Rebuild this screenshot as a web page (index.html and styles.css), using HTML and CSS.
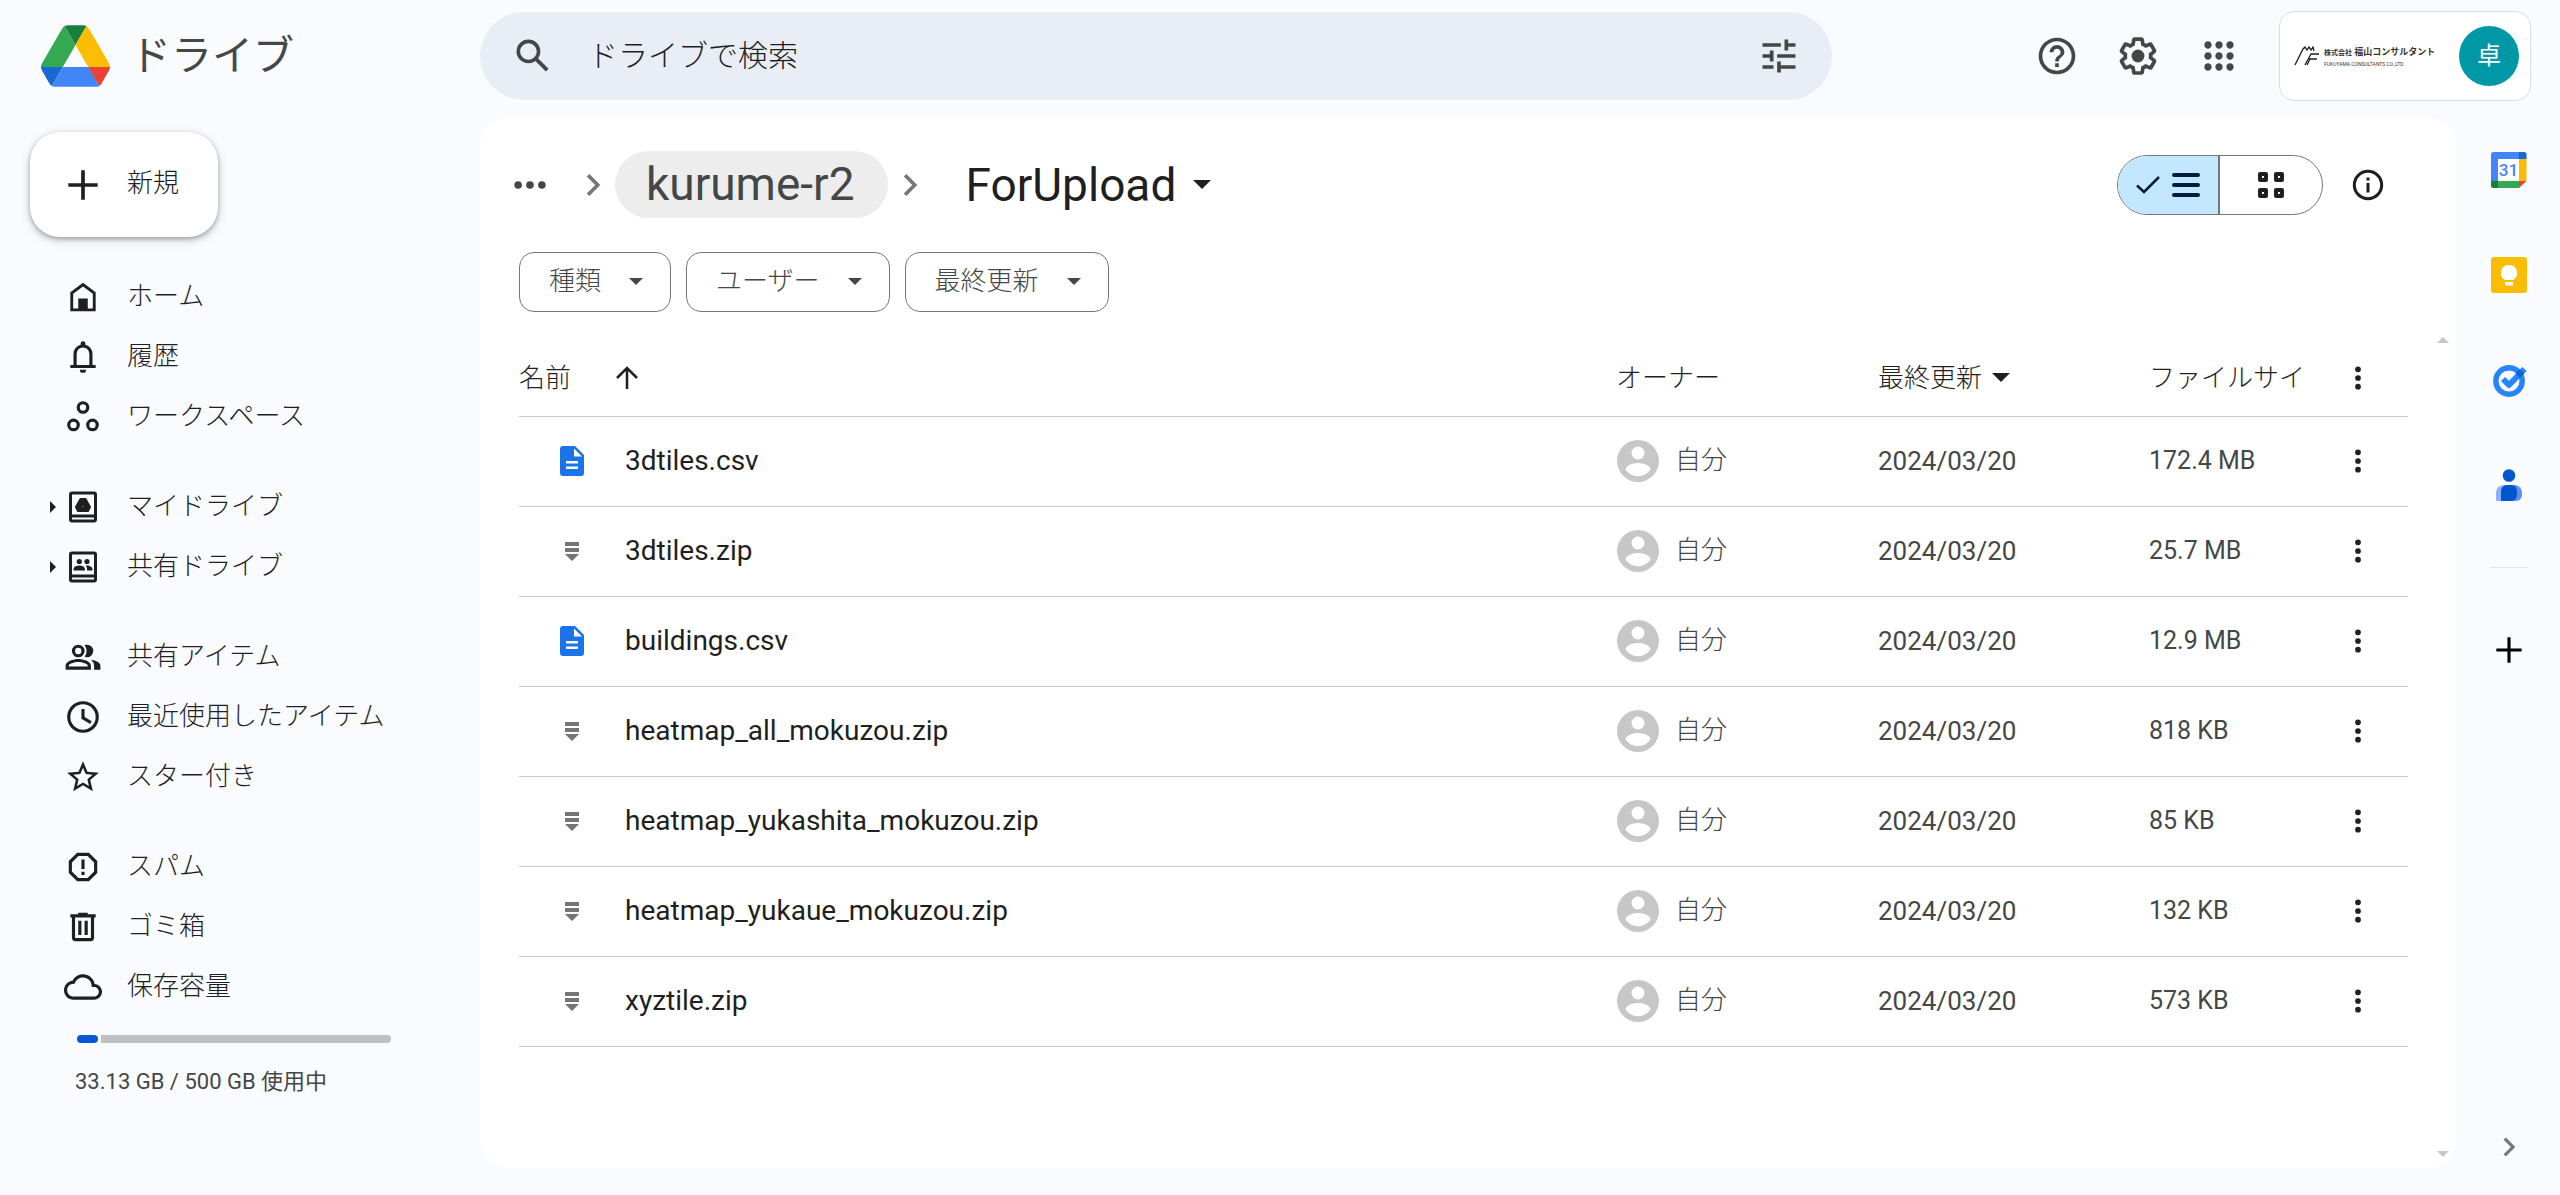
FILE: index.html
```html
<!DOCTYPE html>
<html lang="ja">
<head>
<meta charset="utf-8">
<title>ForUpload - ドライブ</title>
<link rel="stylesheet" href="styles.css">
</head>
<body>
<svg class="defs" aria-hidden="true">
  <symbol id="dots-v" viewBox="0 0 24 24"><circle cx="12" cy="6.500" r="1.800"/><circle cx="12" cy="12" r="1.800"/><circle cx="12" cy="17.500" r="1.800"/></symbol>
  <symbol id="doc" viewBox="0 0 24 30"><path fill="#1a73e8" d="M3 0h12l9 9v18a3 3 0 0 1-3 3H3a3 3 0 0 1-3-3V3a3 3 0 0 1 3-3z"/><path fill="#fff" d="M14 2.500v8h8zM6 15h12v2.500H6zM6 20.500h12V23H6z"/></symbol>
  <symbol id="zip" viewBox="0 0 24 30"><path fill="#757575" d="M5 6h14v4H5zM5 12h14v4H5zM5 18h14l-7 7z"/></symbol>
  <symbol id="person" viewBox="0 0 42 42"><circle cx="21" cy="21" r="21" fill="#c7c7c7"/><circle cx="21" cy="13" r="6.500" fill="#fff"/><path fill="#fff" d="M8.500 29.500c0-4.500 8.300-6.500 12.500-6.500s12.500 2 12.500 6.500a15 15 0 0 1-25 0z"/></symbol>
  <symbol id="chev" viewBox="0 0 24 24"><path d="M8.600 16.600 13.200 12 8.600 7.400 10 6l6 6-6 6z"/></symbol>
  <symbol id="plus" viewBox="0 0 24 24"><path d="M20 13h-7v7h-2v-7H4v-2h7V4h2v7h7z"/></symbol>
</svg>

<header class="top">
  <a class="brand" href="#">
    <svg class="brand-logo" viewBox="0 0 87.300 78"><path d="m6.600 66.850 3.850 6.650c.8 1.400 1.950 2.500 3.300 3.300l13.750-23.800h-27.500c0 1.550.4 3.100 1.200 4.500z" fill="#1967d2"/><path d="m43.650 25-13.750-23.800c-1.350.8-2.500 1.900-3.300 3.300l-25.400 44a9.060 9.060 0 0 0 -1.200 4.500h27.500z" fill="#34a853"/><path d="m73.550 76.800c1.350-.8 2.500-1.900 3.300-3.300l1.600-2.750 7.650-13.250c.8-1.400 1.200-2.950 1.200-4.500h-27.502l5.852 11.500z" fill="#ea4335"/><path d="m43.650 25 13.750-23.800c-1.350-.8-2.900-1.200-4.500-1.200h-18.500c-1.600 0-3.150.45-4.500 1.200z" fill="#188038"/><path d="m59.800 53h-32.300l-13.750 23.800c1.350.8 2.900 1.200 4.500 1.200h50.800c1.600 0 3.150-.45 4.500-1.200z" fill="#4285f4"/><path d="m73.400 26.500-12.700-22c-.8-1.400-1.950-2.500-3.300-3.300l-13.750 23.800 16.150 28h27.450c0-1.550-.4-3.100-1.200-4.500z" fill="#fbbc04"/></svg>
    <span>ドライブ</span>
  </a>
  <form class="search">
    <button class="icon-btn" type="button" aria-label="検索"><svg class="i44" viewBox="0 0 24 24"><path d="M20.490 19l-5.730-5.730C15.530 12.200 16 10.910 16 9.500A6.500 6.500 0 1 0 9.500 16c1.410 0 2.700-.47 3.770-1.240L19 20.490 20.490 19zM5 9.500C5 7.010 7.010 5 9.500 5S14 7.010 14 9.500 11.990 14 9.500 14 5 11.990 5 9.500z"/></svg></button>
    <input type="text" placeholder="ドライブで検索" aria-label="ドライブで検索">
    <button class="icon-btn" type="button" aria-label="検索オプション"><svg class="i44" viewBox="0 0 24 24"><path d="M3 17v2h6v-2H3zM3 5v2h10V5H3zm10 16v-2h8v-2h-8v-2h-2v6h2zM7 9v2H3v2h4v2h2V9H7zm14 4v-2H11v2h10zm-6-4h2V7h4V5h-4V3h-2v6z"/></svg></button>
  </form>
  <div class="tools">
    <button class="icon-btn" aria-label="ヘルプ"><svg class="i44" viewBox="0 0 24 24"><path d="M11 18h2v-2h-2v2zm1-16C6.480 2 2 6.480 2 12s4.480 10 10 10 10-4.480 10-10S17.520 2 12 2zm0 18c-4.410 0-8-3.590-8-8s3.590-8 8-8 8 3.590 8 8-3.590 8-8 8zm0-14c-2.210 0-4 1.790-4 4h2c0-1.100.9-2 2-2s2 .9 2 2c0 2-3 1.750-3 5h2c0-2.250 3-2.500 3-5 0-2.210-1.790-4-4-4z"/></svg></button>
    <button class="icon-btn" aria-label="設定"><svg class="i44" viewBox="0 0 24 24"><path d="M13.850 22.250h-3.700c-.74 0-1.360-.54-1.450-1.270l-.27-1.890c-.27-.14-.53-.29-.79-.46l-1.800.72c-.7.26-1.470-.03-1.810-.65L2.200 15.530c-.35-.66-.2-1.440.36-1.880l1.530-1.190c-.01-.15-.02-.3-.02-.46 0-.15.010-.31.020-.46l-1.520-1.190c-.59-.45-.74-1.260-.37-1.880l1.850-3.190c.34-.62 1.110-.9 1.790-.63l1.810.73c.26-.17.52-.32.780-.46l.27-1.910c.09-.7.71-1.250 1.440-1.250h3.700c.74 0 1.360.54 1.450 1.270l.27 1.890c.27.14.53.29.79.46l1.800-.72c.71-.26 1.480.03 1.820.65l1.840 3.180c.36.66.2 1.440-.36 1.880l-1.520 1.190c.01.15.02.3.02.46s-.01.31-.02.46l1.520 1.190c.56.450.72 1.230.37 1.860l-1.860 3.220c-.34.62-1.110.9-1.800.63l-1.800-.72c-.26.17-.52.32-.78.46l-.27 1.910c-.1.68-.72 1.220-1.460 1.220zm-3.230-2h2.760l.37-2.550.53-.22c.44-.18.88-.44 1.340-.78l.45-.34 2.380.96 1.380-2.400-2.030-1.580.07-.56c.03-.26.06-.51.06-.78s-.03-.53-.06-.78l-.07-.56 2.030-1.580-1.390-2.400-2.390.96-.45-.35c-.42-.32-.87-.58-1.330-.77l-.52-.22-.37-2.550h-2.760l-.37 2.550-.53.210c-.44.19-.88.440-1.340.79l-.45.330-2.380-.95-1.390 2.390 2.030 1.580-.07.56a7 7 0 0 0-.06.79c0 .26.02.53.06.78l.07.56-2.030 1.580 1.380 2.400 2.390-.96.45.35c.43.330.86.580 1.330.77l.53.220z"/><circle cx="12" cy="12" r="3.500"/></svg></button>
    <button class="icon-btn" aria-label="Google アプリ"><svg class="i44" viewBox="0 0 24 24"><path d="M6 8c1.100 0 2-.9 2-2s-.9-2-2-2-2 .9-2 2 .9 2 2 2zm6 12c1.100 0 2-.9 2-2s-.9-2-2-2-2 .9-2 2 .9 2 2 2zm-6 0c1.100 0 2-.9 2-2s-.9-2-2-2-2 .9-2 2 .9 2 2 2zm0-6c1.100 0 2-.9 2-2s-.9-2-2-2-2 .9-2 2 .9 2 2 2zm6 0c1.100 0 2-.9 2-2s-.9-2-2-2-2 .9-2 2 .9 2 2 2zm4-8c0 1.100.9 2 2 2s2-.9 2-2-.9-2-2-2-2 .9-2 2zm-4 2c1.100 0 2-.9 2-2s-.9-2-2-2-2 .9-2 2 .9 2 2 2zm6 6c1.100 0 2-.9 2-2s-.9-2-2-2-2 .9-2 2 .9 2 2 2zm0 6c1.100 0 2-.9 2-2s-.9-2-2-2-2 .9-2 2 .9 2 2 2z"/></svg></button>
  </div>
  <button class="account">
    <svg class="co-mark stroked" viewBox="0 0 26 20" stroke-width="1.300"><path d="M1 19 9 3l2-2 2 3 2-3 2 3 2-3 1 4M11 19l6-11h8M15 13h8M16 13l-3 6"/></svg>
    <span class="co-text"><span class="co-name"><small>株式会社</small> 福山コンサルタント</span><span class="co-en">FUKUYAMA CONSULTANTS CO.,LTD</span></span>
    <span class="avatar">卓</span>
  </button>
</header>

<div class="body">
  <aside class="side">
    <button class="new"><svg class="i44" viewBox="0 0 24 24"><use href="#plus"/></svg><span class="label">新規</span></button>
    <nav>
      <ul>
        <li><a href="#"><svg class="i38" viewBox="0 0 24 24"><path fill-rule="evenodd" d="M12 3 4 9v12h16V9zM12 5.300 18.200 10v9.200H15V13H9v6.200H5.800V10z"/></svg><span class="label">ホーム</span></a></li>
        <li><a href="#"><svg class="i38" viewBox="0 0 24 24"><path fill-rule="evenodd" d="M4 19v-2h2v-7a6 6 0 0 1 4.500-5.800v-.7a1.500 1.500 0 0 1 3 0v.7A6 6 0 0 1 18 10v7h2v2zM8 17h8v-7a4 4 0 0 0-8 0zM12 22a2 2 0 0 1-2-2h4a2 2 0 0 1-2 2z"/></svg><span class="label">履歴</span></a></li>
        <li><a href="#"><svg class="i38 stroked" viewBox="0 0 24 24" stroke-width="2"><circle cx="12" cy="6" r="3"/><circle cx="6" cy="17" r="3"/><circle cx="18" cy="17" r="3"/></svg><span class="label">ワークスペース</span></a></li>
      </ul>
      <ul>
        <li><a class="tree" href="#"><svg class="i38" viewBox="0 0 38 38"><rect x="6.500" y="5" width="25" height="28" rx="1.500" fill="none" stroke="currentColor" stroke-width="3"/><path d="M6 26.500h26v3H6z"/><path fill-rule="evenodd" stroke="currentColor" stroke-width="2" stroke-linejoin="round" d="M16.500 11h5l4.500 8-2 4H14l-2-4zM19 15l-2.500 4.500h5z"/></svg><span class="label">マイドライブ</span></a></li>
        <li><a class="tree" href="#"><svg class="i38" viewBox="0 0 38 38"><rect x="6.500" y="5" width="25" height="28" rx="1.500" fill="none" stroke="currentColor" stroke-width="3"/><path d="M6 26.500h26v3H6z"/><circle cx="15.300" cy="13.500" r="2.600"/><circle cx="23" cy="13.500" r="2.600"/><path d="M9.500 22.500v-1.500c0-2.500 3.800-3.500 5.800-3.500s5.700 1 5.700 3.500v1.500zM23 22.500v-1.500c0-1.500-.6-2.500-1.500-3.400 3-.4 7 .9 7 3.400v1.500z"/></svg><span class="label">共有ドライブ</span></a></li>
      </ul>
      <ul>
        <li><a href="#"><svg class="i38" viewBox="0 0 24 24"><path fill-rule="evenodd" d="M9 4.200A4 4 0 1 0 9 12.200 4 4 0 0 0 9 4.200zm0 2a2 2 0 1 1 0 4 2 2 0 0 1 0-4zM9 13.300c-2.700 0-8 1.300-8 4.200V20h16v-2.500c0-2.900-5.300-4.200-8-4.200zM15 18H3v-.6c0-1 3.300-2.200 6-2.200s6 1.200 6 2.200zM14.500 12.200a4 4 0 0 0 0-8c-.6 0-1 .1-1.500.3a6 6 0 0 1 0 7.400c.5.200.9.300 1.500.3zM17 13.700c1.200.9 2 2.100 2 3.800V20h4v-2.500c0-2.200-3-3.400-6-3.800z"/></svg><span class="label">共有アイテム</span></a></li>
        <li><a href="#"><svg class="i38 stroked" viewBox="0 0 24 24" stroke-width="2"><circle cx="12" cy="12" r="9"/><path d="M12 7v5.500l5 3"/></svg><span class="label">最近使用したアイテム</span></a></li>
        <li><a href="#"><svg class="i38" viewBox="0 0 24 24"><path d="M22 9.240l-7.190-.62L12 2 9.190 8.630 2 9.240l5.460 4.730L5.820 21 12 17.270 18.180 21l-1.630-7.030L22 9.240zM12 15.400l-3.760 2.270 1-4.280-3.320-2.880 4.380-.38L12 6.100l1.710 4.040 4.380.38-3.320 2.880 1 4.280L12 15.400z"/></svg><span class="label">スター付き</span></a></li>
      </ul>
      <ul>
        <li><a href="#"><svg class="i38 stroked" viewBox="0 0 24 24" stroke-width="2"><path d="M8.700 4h6.600L20 8.700v6.600L15.300 20H8.700L4 15.300V8.700zM12 7.300v6M12 15v2"/></svg><span class="label">スパム</span></a></li>
        <li><a href="#"><svg class="i38" viewBox="0 0 24 24"><path d="M15 4V3H9v1H4v2h1v13c0 1.100.9 2 2 2h10c1.100 0 2-.9 2-2V6h1V4h-5zm2 15H7V6h10v13zM9 8h2v9H9zm4 0h2v9h-2z"/></svg><span class="label">ゴミ箱</span></a></li>
        <li><a href="#"><svg class="i38" viewBox="0 0 24 24"><path d="M19.350 10.040C18.670 6.590 15.640 4 12 4 9.110 4 6.600 5.640 5.350 8.040 2.340 8.360 0 10.910 0 14c0 3.310 2.690 6 6 6h13c2.760 0 5-2.240 5-5 0-2.640-2.050-4.780-4.650-4.960zM19 18H6c-2.210 0-4-1.790-4-4s1.790-4 4-4h.71C7.370 7.690 9.480 6 12 6c3.040 0 5.500 2.460 5.500 5.500v.5H19c1.660 0 3 1.340 3 3s-1.340 3-3 3z"/></svg><span class="label">保存容量</span></a></li>
      </ul>
    </nav>
    <div class="meter"><span class="used"></span><span class="free"></span></div>
    <p class="quota">33.13 GB / 500 GB 使用中</p>
  </aside>

  <main class="main">
    <div class="path">
      <button class="icon-btn dots" aria-label="パスを表示"><svg class="i38" viewBox="0 0 24 24"><circle cx="4.500" cy="12" r="2.400"/><circle cx="12" cy="12" r="2.400"/><circle cx="19.500" cy="12" r="2.400"/></svg></button>
      <svg class="i44 sep" viewBox="0 0 24 24"><use href="#chev"/></svg>
      <a class="crumb" href="#">kurume-r2</a>
      <svg class="i44 sep" viewBox="0 0 24 24"><use href="#chev"/></svg>
      <button class="current">ForUpload<i class="caret wide"></i></button>
      <div class="views">
        <button class="on" aria-label="リスト レイアウト"><svg class="v-check stroked" viewBox="0 0 24 18" stroke-width="2.500"><path d="M1 9.500 8 16 23 1"/></svg><svg class="v-list stroked" viewBox="0 0 28 24" stroke-width="4" stroke-linecap="round"><path d="M2 2h24M2 12h24M2 22h24"/></svg></button>
        <button aria-label="グリッド レイアウト"><svg class="v-grid stroked" viewBox="0 0 28 28" stroke-width="4" stroke-linejoin="round"><path d="M3 3h6v6H3zM19 3h6v6h-6zM3 19h6v6H3zM19 19h6v6h-6z"/></svg></button>
      </div>
      <button class="icon-btn info" aria-label="詳細を表示"><svg class="i38" viewBox="0 0 20 20"><path fill-rule="evenodd" d="M10 2a8 8 0 1 0 0 16 8 8 0 0 0 0-16zm0 1.600a6.400 6.400 0 1 1 0 12.800 6.400 6.400 0 0 1 0-12.800zM9.200 9h1.600v5H9.200zM9.200 6h1.600v1.600H9.200z"/></svg></button>
    </div>
    <div class="chips">
      <button>種類<i class="caret"></i></button>
      <button>ユーザー<i class="caret"></i></button>
      <button>最終更新<i class="caret"></i></button>
    </div>
    <div class="list">
      <table>
        <colgroup><col class="c-name"><col class="c-owner"><col class="c-date"><col class="c-size"><col class="c-more"></colgroup>
        <thead><tr>
          <th><span class="cell sort">名前<svg class="arrow stroked" viewBox="0 0 24 24" stroke-width="2.500"><path d="M12 23V2M2 12 12 2l10 10"/></svg></span></th>
          <th>オーナー</th>
          <th><span class="cell mod">最終更新<i class="caret wide"></i></span></th>
          <th>ファイルサイ</th>
          <th><button class="icon-btn" aria-label="その他"><svg class="i38"><use href="#dots-v"/></svg></button></th>
        </tr></thead>
        <tbody>
          <tr><td><span class="cell"><svg class="ftype"><use href="#doc"/></svg>3dtiles.csv</span></td><td><span class="cell own"><svg class="who"><use href="#person"/></svg><span class="label">自分</span></span></td><td>2024/03/20</td><td>172.4 MB</td><td><button class="icon-btn" aria-label="操作"><svg class="i38"><use href="#dots-v"/></svg></button></td></tr>
          <tr><td><span class="cell"><svg class="ftype"><use href="#zip"/></svg>3dtiles.zip</span></td><td><span class="cell own"><svg class="who"><use href="#person"/></svg><span class="label">自分</span></span></td><td>2024/03/20</td><td>25.7 MB</td><td><button class="icon-btn" aria-label="操作"><svg class="i38"><use href="#dots-v"/></svg></button></td></tr>
          <tr><td><span class="cell"><svg class="ftype"><use href="#doc"/></svg>buildings.csv</span></td><td><span class="cell own"><svg class="who"><use href="#person"/></svg><span class="label">自分</span></span></td><td>2024/03/20</td><td>12.9 MB</td><td><button class="icon-btn" aria-label="操作"><svg class="i38"><use href="#dots-v"/></svg></button></td></tr>
          <tr><td><span class="cell"><svg class="ftype"><use href="#zip"/></svg>heatmap_all_mokuzou.zip</span></td><td><span class="cell own"><svg class="who"><use href="#person"/></svg><span class="label">自分</span></span></td><td>2024/03/20</td><td>818 KB</td><td><button class="icon-btn" aria-label="操作"><svg class="i38"><use href="#dots-v"/></svg></button></td></tr>
          <tr><td><span class="cell"><svg class="ftype"><use href="#zip"/></svg>heatmap_yukashita_mokuzou.zip</span></td><td><span class="cell own"><svg class="who"><use href="#person"/></svg><span class="label">自分</span></span></td><td>2024/03/20</td><td>85 KB</td><td><button class="icon-btn" aria-label="操作"><svg class="i38"><use href="#dots-v"/></svg></button></td></tr>
          <tr><td><span class="cell"><svg class="ftype"><use href="#zip"/></svg>heatmap_yukaue_mokuzou.zip</span></td><td><span class="cell own"><svg class="who"><use href="#person"/></svg><span class="label">自分</span></span></td><td>2024/03/20</td><td>132 KB</td><td><button class="icon-btn" aria-label="操作"><svg class="i38"><use href="#dots-v"/></svg></button></td></tr>
          <tr><td><span class="cell"><svg class="ftype"><use href="#zip"/></svg>xyztile.zip</span></td><td><span class="cell own"><svg class="who"><use href="#person"/></svg><span class="label">自分</span></span></td><td>2024/03/20</td><td>573 KB</td><td><button class="icon-btn" aria-label="操作"><svg class="i38"><use href="#dots-v"/></svg></button></td></tr>
        </tbody>
      </table>
      <div class="scroll"><i class="up"></i><i class="down"></i></div>
    </div>
  </main>

  <aside class="rail">
    <button class="icon-btn" aria-label="カレンダー"><svg class="i36" viewBox="0 0 36 36"><path fill="#fff" d="M7 7h22v22H7z"/><path fill="#4285f4" d="M2.500 0H28v7H7v22H0V2.500A2.500 2.500 0 0 1 2.500 0z"/><path fill="#1967d2" d="M28 0h5a2.500 2.500 0 0 1 2.500 2.500V7H28z"/><path fill="#fbbc04" d="M28 7h7.500v22H28z"/><path fill="#188038" d="M0 29h7v7H2.500A2.500 2.500 0 0 1 0 33.500z"/><path fill="#34a853" d="M7 29h21v7H7z"/><path fill="#ea4335" d="M28 29h7.500L28 36z"/><text x="17.500" y="24" text-anchor="middle" class="cal">31</text></svg></button>
    <button class="icon-btn" aria-label="Keep"><svg class="i36" viewBox="0 0 36 36"><rect width="36" height="36" rx="3" fill="#fbbc04"/><path fill="#fff" d="M18 8a8 8 0 0 0-4 15h8a8 8 0 0 0-4-15zM14 25h8v3.500h-8z"/></svg></button>
    <button class="icon-btn" aria-label="ToDo リスト"><svg class="i36" viewBox="0 0 36 36"><circle cx="18" cy="19" r="13.200" fill="none" stroke="#2684fc" stroke-width="5.400"/><path fill="none" stroke="#2684fc" stroke-width="6" stroke-linejoin="round" d="M12 17l6 6L33.500 7"/><path fill="#0066da" d="m24.500 11.500 4.500-4.500 4 4.500-4.500 4.500a13 13 0 0 0-4-4.500z"/></svg></button>
    <button class="icon-btn" aria-label="連絡先"><svg class="i36" viewBox="0 0 36 36"><circle cx="18" cy="8.500" r="6.300" fill="#0057cc"/><path fill="#8ab0ff" d="M5 34v-8a8 8 0 0 1 8-8h5v16z"/><path fill="#5c8df8" d="M18 18h5a8 8 0 0 1 8 8v2a6 6 0 0 1-6 6h-7z"/><path fill="#0057cc" d="M10 34V24a6 6 0 0 1 6-6h4a6 6 0 0 1 6 6v4a6 6 0 0 1-6 6z"/></svg></button>
    <hr>
    <button class="icon-btn" aria-label="アドオンを取得"><svg class="i38 black" viewBox="0 0 24 24"><use href="#plus"/></svg></button>
    <button class="icon-btn hide" aria-label="サイドパネルを非表示"><svg class="i38 sep" viewBox="0 0 24 24"><use href="#chev"/></svg></button>
  </aside>
</div>
</body>
</html>
```
FILE: styles.css
```css
* { box-sizing: border-box; }

body {
  margin: 0;
  min-height: 100vh;
  display: flex;
  flex-direction: column;
  background: #f9fbff;
  color: #1f1f1f;
  font: 300 26px/36px "Roboto", "Noto Sans CJK JP", sans-serif;
}

a { color: inherit; text-decoration: none; }
button, input { font: inherit; color: inherit; border: 0; background: none; padding: 0; }
ul { list-style: none; margin: 0; padding: 0; }
svg { display: block; flex: none; fill: currentColor; }
.stroked { fill: none; stroke: currentColor; }
.defs { position: absolute; width: 0; height: 0; }
.i36 { width: 36px; height: 36px; }
.i38 { width: 38px; height: 38px; }
.i44 { width: 44px; height: 44px; }
.black { color: #000; }
.icon-btn { display: flex; align-items: center; justify-content: center; flex: none; color: #444746; }
.sep { color: #747775; }
.caret { flex: none; border: 7px solid transparent; border-top-color: currentColor; border-bottom: 0; }
.caret.wide { border-width: 9px 9px 0; }
.label { padding-bottom: 3px; }

/* Header */
.top { display: flex; align-items: center; height: 117px; padding: 0 29px 5px 0; }
.brand { display: flex; align-items: center; gap: 20px; width: 480px; padding-left: 41px; color: #444746; font-size: 41px; line-height: 48px; font-weight: 400; }
.brand-logo { width: 69px; height: 62px; }
.search { display: flex; align-items: center; flex: 0 1 1352px; height: 88px; padding: 0 31px; border-radius: 44px; background: #e9eef6; }
.search input { flex: 1; min-width: 0; margin: 0 33px; font-size: 30px; outline: 0; }
.search input::placeholder { color: #1f1f1f; opacity: 1; }
.tools { display: flex; gap: 37px; margin-left: auto; padding-right: 38px; }
.account { display: flex; align-items: center; width: 252px; height: 90px; padding: 0 11px 0 14px; border: 1px solid #dadce0; border-radius: 15px; background: #fff; }
.co-mark { width: 26px; height: 20px; }
.co-text { display: flex; flex-direction: column; margin: 0 auto 0 4px; text-align: left; color: #333; white-space: nowrap; }
.co-name { font-size: 9px; line-height: 14px; font-weight: 700; }
.co-name small { font-size: 7px; }
.co-en { font-size: 5px; line-height: 8px; font-weight: 400; }
.avatar { width: 60px; height: 60px; border-radius: 50%; background: #0097a7; color: #fff; font-size: 24px; line-height: 60px; font-weight: 400; text-align: center; }

.body { flex: 1; display: grid; grid-template-columns: 480px minmax(0, 1fr) 104px; }

/* Sidebar */
.side { padding: 15px 60px 0 30px; }
.new { display: flex; align-items: center; gap: 22px; width: 188px; height: 105px; padding-left: 31px; border-radius: 30px; background: #fff; box-shadow: 0 2px 4px rgba(60, 64, 67, .4), 0 3px 8px 2px rgba(60, 64, 67, .15); }
nav { padding-top: 30px; }
nav ul { margin-bottom: 30px; }
nav a { position: relative; display: flex; align-items: center; height: 60px; padding-left: 34px; gap: 25px; white-space: nowrap; }
.tree::before { content: ""; position: absolute; left: 20px; border: 6px solid transparent; border-left-color: currentColor; border-right: 0; }
.meter { display: flex; gap: 3px; margin: -12px 0 0 47px; width: 314px; height: 8px; }
.used { width: 21px; border-radius: 4px; background: #0b57d0; }
.free { flex: 1; border-radius: 0 4px 4px 0; background: #bdc1c6; }
.quota { margin: 21px 0 0 45px; color: #444746; font-size: 22px; line-height: 36px; font-weight: 400; white-space: nowrap; }

/* File panel */
.main { display: flex; flex-direction: column; margin-bottom: 27px; padding: 34px 5px 0 39px; border-radius: 30px; background: #fff; }
.path { display: flex; align-items: center; height: 67px; padding-right: 64px; font-size: 46px; font-weight: 400; line-height: 56px; }
.dots { margin: 0 22px 0 -8px; }
.crumb { padding: 5px 33px 6px 31px; border-radius: 34px; background: #ededed; color: #444746; }
.current { display: flex; align-items: center; gap: 17px; margin-left: 34px; }
.views { display: flex; margin-left: auto; height: 60px; border: 1px solid #747775; border-radius: 30px; overflow: hidden; }
.views button { display: flex; align-items: center; justify-content: center; gap: 12px; width: 102px; }
.views .on { background: #c2e7ff; color: #001d35; border-right: 2px solid #747775; }
.v-check { width: 24px; height: 18px; }
.v-list { width: 28px; height: 24px; }
.v-grid { width: 28px; height: 28px; }
.info { margin-left: 26px; color: #1f1f1f; }
.chips { display: flex; gap: 15px; margin-top: 34px; }
.chips button { display: flex; align-items: center; gap: 28px; height: 60px; padding: 0 27px 2px 29px; border: 1px solid #747775; border-radius: 15px; color: #444746; }
.list { flex: 1; display: flex; align-items: flex-start; margin-top: 20px; }
table { flex: 1; margin-right: 27px; border-collapse: collapse; table-layout: fixed; }
.c-owner { width: 262px; }
.c-date { width: 271px; }
.c-size { width: 190px; }
.c-more { width: 69px; }
th, td { padding: 0; border-bottom: 1px solid #c7c7c7; text-align: left; white-space: nowrap; }
th { height: 84px; padding-top: 8px; font-weight: 300; }
td { height: 90px; font-weight: 400; }
td:first-child { font-size: 28px; }
td:nth-child(n+2) { color: #444746; }
td:nth-child(4) { font-size: 25px; }
.cell { display: flex; align-items: center; }
.sort { gap: 44px; }
.mod { gap: 10px; }
.arrow { width: 24px; height: 24px; }
.ftype { width: 24px; height: 30px; margin: 0 41px; }
.own { gap: 16px; padding-left: 1px; font-weight: 300; }
.who { width: 42px; height: 42px; }
td .icon-btn, th .icon-btn { color: #1f1f1f; }
.scroll { display: flex; flex-direction: column; justify-content: space-between; align-self: stretch; padding: 5px 2px 11px; }
.up { border: solid transparent; border-width: 0 6px 6px; border-bottom-color: #c7c7c7; }
.down { border: solid transparent; border-width: 6px 6px 0; border-top-color: #c7c7c7; }

/* Add-on rail */
.rail { display: flex; flex-direction: column; align-items: center; padding: 35px 0 30px 2px; }
.rail .icon-btn { height: 36px; margin-bottom: 69px; }
.rail hr { width: 38px; margin: -5px 0 64px; border: 0; border-top: 1px solid #e0e3e7; }
.rail .hide { margin: auto 0 0; }
.cal { font: 500 17px "Roboto", sans-serif; fill: #4285f4; }
```
